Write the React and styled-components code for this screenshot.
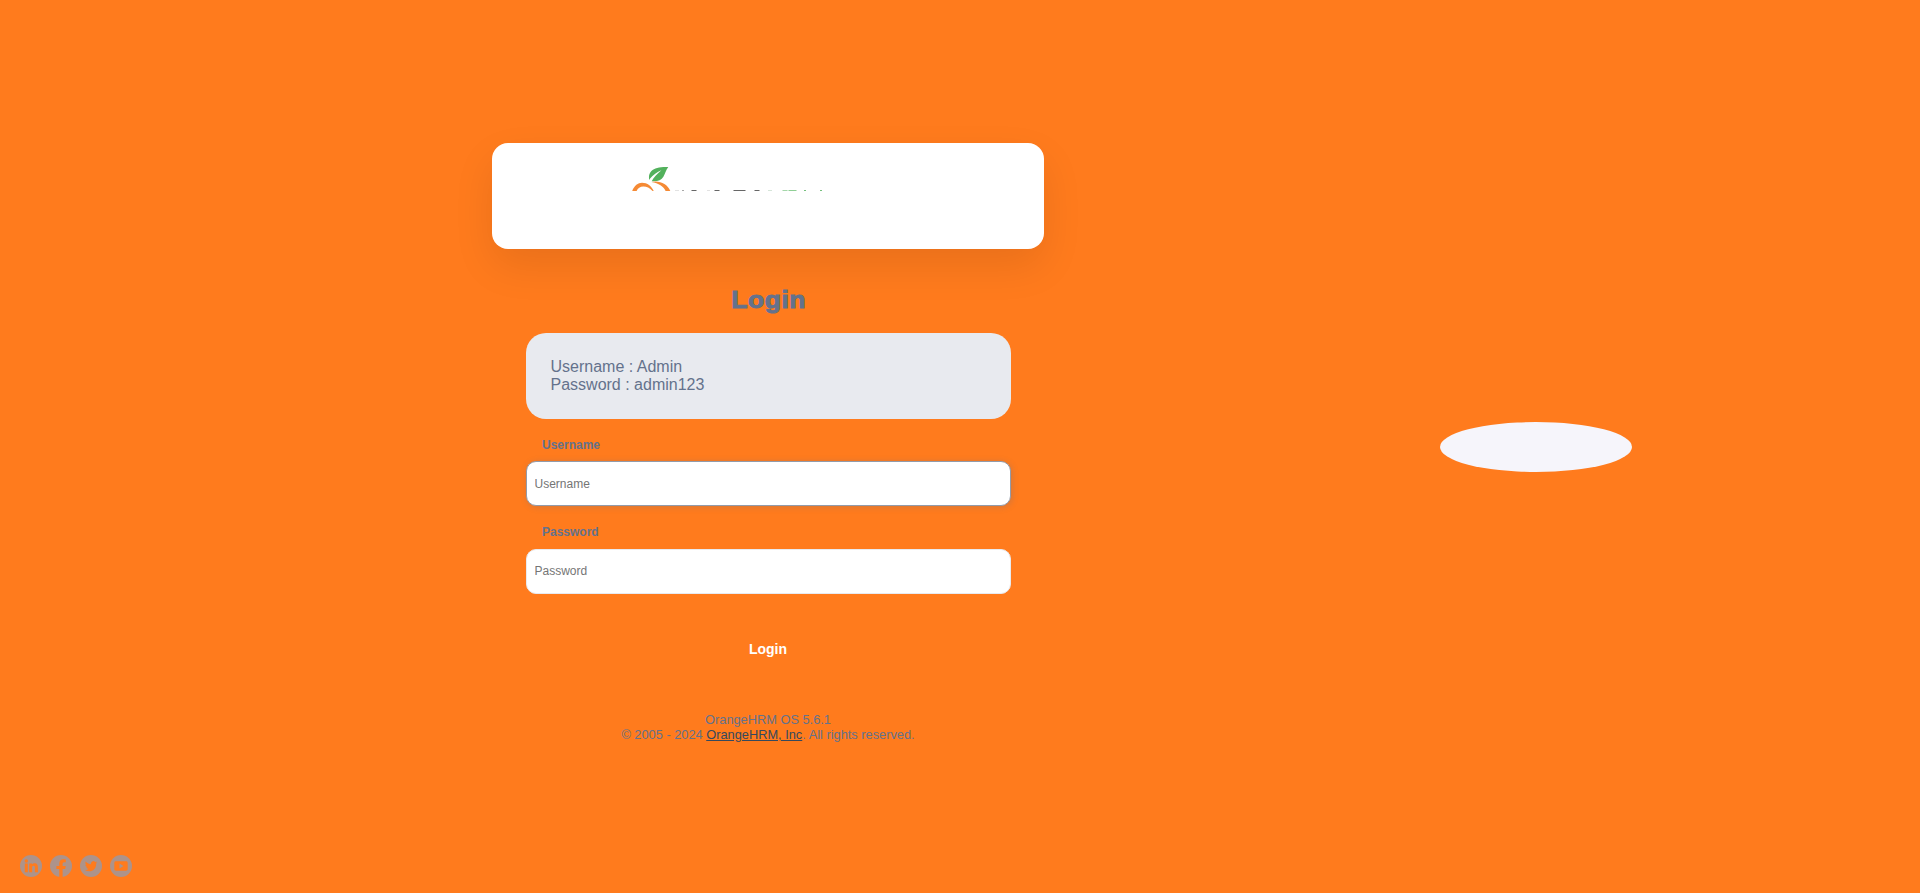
import React from "react";
import styled, { createGlobalStyle } from "styled-components";

const GlobalStyle = createGlobalStyle`
  *, *::before, *::after { box-sizing: border-box; }
  body {
    margin: 0;
    background: #ff7b1d;
    font-family: "Liberation Sans", Arial, sans-serif;
    color: #64728c;
  }
`;

const Page = styled.main`
  display: flex;
  height: 893px;
  overflow: hidden;
`;

const LoginSection = styled.section`
  flex: none;
  display: flex;
  flex-direction: column;
  width: 1152px;
  padding-top: 143px;
`;

const Slot = styled.div`
  display: flex;
  flex-direction: column;
  align-items: center;
  width: 768px;
  margin-left: 384px;
`;

const BrandingCard = styled.div`
  width: 552px;
  height: 106px;
  padding: 24px 0 0 139px;
  border-radius: 16px;
  background: #fff;
  box-shadow: 0 17px 42px rgba(0, 0, 0, 0.09);
`;

const LogoSvg = styled.svg`
  display: block;
`;

const Title = styled.h5`
  margin: 37px 0 0;
  padding-left: 1px;
  font-size: 24.5px;
  line-height: 28px;
  font-weight: 700;
  letter-spacing: 0.5px;
  transform: scaleX(1.08);
  -webkit-text-stroke: 1px #64728c;
`;

const Form = styled.form`
  display: flex;
  flex-direction: column;
  width: 485px;
`;

const Hint = styled.div`
  height: 86px;
  margin: 19px 0 17px;
  padding: 25px;
  border-radius: 20px;
  background: #e8eaef;
  font-size: 16px;
  line-height: 18px;
`;

const HintLine = styled.p`
  margin: 0;
`;

const Field = styled.div`
  display: flex;
  flex-direction: column;
  height: 87.3px;
`;

const Label = styled.label`
  height: 25.3px;
  padding-left: 16.5px;
  font-size: 12px;
  line-height: 18px;
  font-weight: 700;
`;

const Input = styled.input`
  height: 45px;
  padding: 0 8px;
  border: 1px solid ${(p) => (p.$active ? "#929baa" : "#e8eaef")};
  border-radius: 10px;
  outline: none;
  background: #fff;
  box-shadow: ${(p) => (p.$active ? "1px 1px 6px rgba(100, 114, 140, 0.3)" : "none")};
  font-family: inherit;
  font-size: 12px;
  color: #64728c;
  &::placeholder { color: #757575; opacity: 1; }
`;

const SubmitButton = styled.button`
  align-self: center;
  height: 46px;
  width: 200px;
  margin-top: 15.4px;
  border: 0;
  background: transparent;
  font-family: inherit;
  font-size: 14px;
  font-weight: 700;
  color: #fff;
`;

const Copyright = styled.footer`
  margin-top: 40px;
  font-size: 12.8px;
  line-height: 15px;
  text-align: center;
`;

const CopyrightLine = styled.p`
  margin: 0;
`;

const CompanyLink = styled.a`
  color: #35495e;
  text-decoration: underline;
`;

const SocialBar = styled.nav`
  display: flex;
  gap: 8px;
  margin: auto 0 16px 20px;
`;

const SocialIcon = styled.svg`
  display: block;
  width: 22px;
  height: 22px;
`;

const SideSection = styled.section`
  flex: 1;
  display: flex;
  align-items: center;
  justify-content: center;
`;

const Ellipse = styled.div`
  width: 192px;
  height: 50px;
  border-radius: 50%;
  background: #f6f5fb;
`;

const WORDMARK_EDGES = [
  [44, 4, "#ddd"], [51, 2, "#999"], [60, 6, "#666"], [76, 3, "#ddd"], [83, 6, "#666"],
  [102, 13, "#666"], [123, 6, "#666"], [137, 4, "#cfe0d2"], [151, 6, "#a5d7aa"],
  [157, 9, "#8fcf95"], [173, 2, "#5db566"], [189, 2, "#5db566"],
];

const Logo = () => (
  <LogoSvg width="200" height="24" viewBox="0 0 200 24">
    <path fill="#52b15c" d="M37.300 0C29.500-.1 23.600.6 20.400 4.100c-2.600 2.800-2.800 6-2.100 9l.8-1.700C22 8 26 5 30.400 3.200 26.200 7 22.400 10.300 20.700 14.200c5.600.6 9.700-1.200 11.700-4.500C34.200 6.600 35 3 37.300 0z" />
    <path fill="#f58a35" d="M1.200 24C3.300 18.500 7 15.700 11 15.700c5.300 0 9.700 3.400 11.700 8.300h-1.100c-3-3.300-5.800-4.500-9.200-4.500-3.300 0-5.500 1.600-6.800 4.500z" />
    <path fill="#f58a35" d="M20.300 15.100c8-1.900 16 1.600 19 8.900h-4.700c-2.100-4.600-6.700-7.700-14.300-8.900z" />
    {WORDMARK_EDGES.map(([x, w, color]) => (
      <g key={x} fill={color}>
        <rect x={x} y="23" width={w} height="1" opacity={w > 5 ? 0.5 : 0.85} />
        {w > 5 && <rect x={x + 1} y="23" width={w - 2} height="1" />}
      </g>
    ))}
  </LogoSvg>
);

const SOCIALS = [
  {
    name: "LinkedIn",
    path: "M4.800 8.500h3V17.200h-3zM6.300 4.300a1.700 1.700 0 1 1 0 3.400 1.700 1.700 0 0 1 0-3.400zM9.200 8.500h2.800v1.100c.6-.9 1.500-1.400 2.600-1.400 2.600 0 3.300 1.700 3.300 4.100v4.900h-3v-4.300c0-1.300-.2-2.100-1.300-2.100s-1.500.8-1.500 2.100v4.300H9.200z",
  },
  {
    name: "Facebook",
    path: "M9.300 22v-8H6.400v-3.100h2.900V8.400c0-2.700 1.600-4.200 4.100-4.200 1 0 2 .2 2.400.3v2.700h-1.400c-1.300 0-1.800.8-1.800 1.700v2h3.100l-.5 3.100h-2.600v8z",
  },
  {
    name: "Twitter",
    path: "M17.200 7.300c-.5.2-1 .4-1.500.4.500-.3.900-.8 1.100-1.400-.5.300-1 .5-1.600.6a2.550 2.550 0 0 0-4.300 2.300C8.700 9.100 6.900 8 5.700 6.500c-.7 1.200-.3 2.600.8 3.400-.4 0-.8-.1-1.200-.3 0 1.300.9 2.300 2.100 2.500-.4.100-.8.100-1.200 0 .3 1 1.300 1.800 2.400 1.800-1.100.9-2.400 1.200-3.800 1.100 5.400 3.400 11.600.1 11.300-6.300.4-.4.800-.8 1.100-1.400z",
  },
  {
    name: "YouTube",
    path: "M6 6.300h10c1.100 0 1.700.6 1.700 1.700v6c0 1.100-.6 1.700-1.700 1.700H6c-1.100 0-1.700-.6-1.700-1.700V8c0-1.100.6-1.700 1.700-1.700zM9.500 8.600v4.800l4-2.400z",
  },
];

export default function App() {
  return (
    <>
      <GlobalStyle />
      <Page>
        <LoginSection>
          <Slot>
            <BrandingCard>
              <Logo />
            </BrandingCard>
            <Title>Login</Title>
            <Form onSubmit={(e) => e.preventDefault()}>
              <Hint>
                <HintLine>Username : Admin</HintLine>
                <HintLine>Password : admin123</HintLine>
              </Hint>
              <Field>
                <Label htmlFor="username">Username</Label>
                <Input id="username" placeholder="Username" $active />
              </Field>
              <Field>
                <Label htmlFor="password">Password</Label>
                <Input id="password" type="password" placeholder="Password" />
              </Field>
              <SubmitButton>Login</SubmitButton>
            </Form>
            <Copyright>
              <CopyrightLine>OrangeHRM OS 5.6.1</CopyrightLine>
              <CopyrightLine>
                © 2005 - 2024 <CompanyLink href="#">OrangeHRM, Inc</CompanyLink>. All rights reserved.
              </CopyrightLine>
            </Copyright>
          </Slot>
          <SocialBar>
            {SOCIALS.map((s) => (
              <SocialIcon key={s.name} viewBox="0 0 22 22" role="img" aria-label={s.name}>
                <circle cx="11" cy="11" r="11" fill="#ad938a" />
                <path d={s.path} fill="#ff7b1d" fillRule="evenodd" />
              </SocialIcon>
            ))}
          </SocialBar>
        </LoginSection>
        <SideSection>
          <Ellipse />
        </SideSection>
      </Page>
    </>
  );
}
